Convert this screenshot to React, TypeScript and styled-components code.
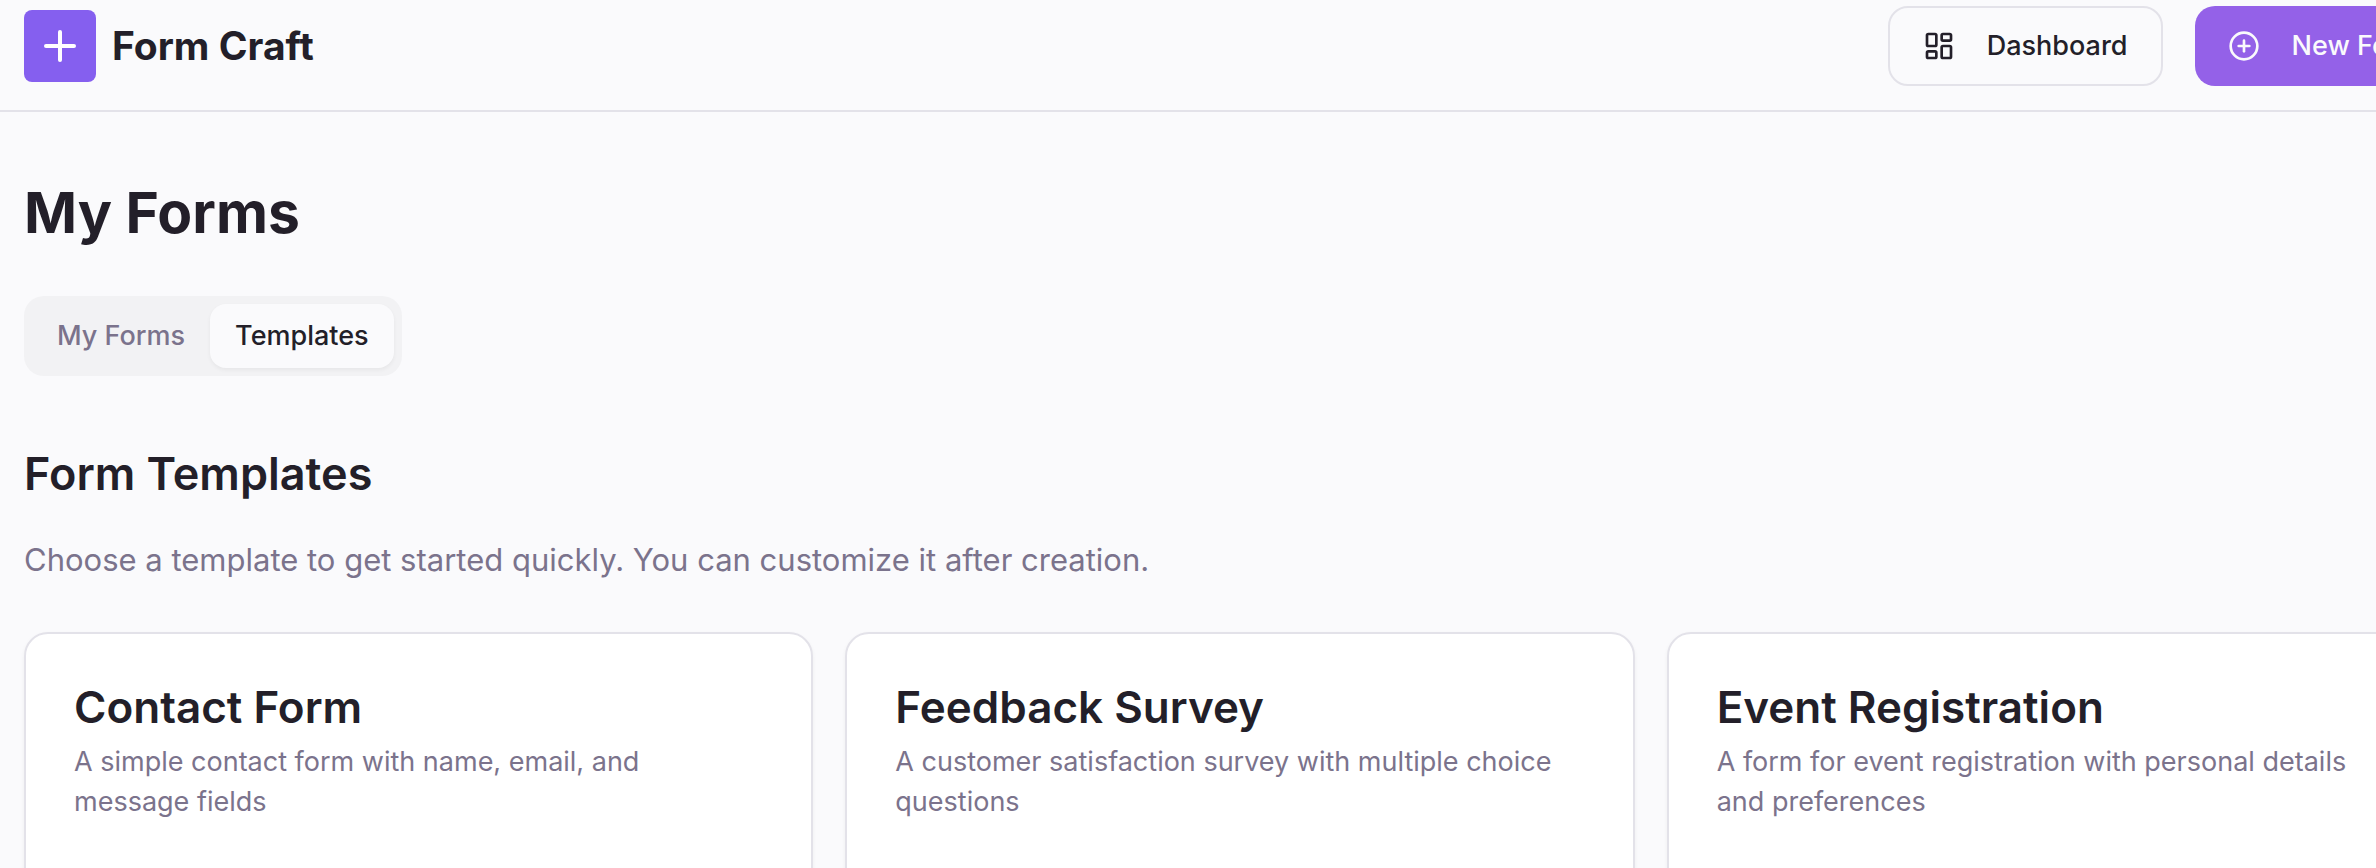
import React from "react";
import styled, { createGlobalStyle, css } from "styled-components";
import { CirclePlus, LayoutDashboard, Plus } from "lucide-react";

const color = {
  page: "#fafafc",
  card: "#ffffff",
  border: "#e3e2e9",
  text: "#231f29",
  muted: "#7b738c",
  track: "#f2f2f4",
  brand: "#855fef",
  primary: "#9461e8",
};

const GlobalStyle = createGlobalStyle`
  *, *::before, *::after { box-sizing: border-box; }
  body {
    margin: 0;
    overflow-x: hidden;
    background: ${color.page};
    color: ${color.text};
    font-family: Inter, "Liberation Sans", sans-serif;
    font-size: 27px;
    line-height: 40px;
  }
  h1, h2, h3, p { margin: 0; }
  button { font: inherit; cursor: pointer; }
`;

/* The workspace is a little wider than the window and runs off its right edge. */
const Workspace = styled.div`
  width: calc(100% + 104px);
  min-height: 100vh;
`;

const Header = styled.header`
  display: flex;
  align-items: center;
  justify-content: space-between;
  padding: 6px 24px 24px;
  border-bottom: 2px solid ${color.border};
`;

const Brand = styled.a`
  display: flex;
  align-items: center;
  gap: 16px;
  color: inherit;
  text-decoration: none;
  font-size: 39px;
  line-height: 56px;
  font-weight: 700;
`;

const BrandMark = styled.span`
  display: grid;
  place-items: center;
  width: 72px;
  height: 72px;
  border-radius: 8px;
  background: ${color.brand};
  color: #ffffff;
`;

const Actions = styled.nav`
  display: flex;
  gap: 32px;
`;

const ActionButton = styled.button<{ $variant: "outline" | "primary" }>`
  display: flex;
  align-items: center;
  gap: 32px;
  height: 80px;
  padding: 0 33px;
  border: 0;
  border-radius: 20px;
  font-weight: 500;
  white-space: nowrap;
  ${({ $variant }) =>
    $variant === "outline"
      ? css`
          border: 2px solid ${color.border};
          background: ${color.page};
          color: ${color.text};
        `
      : css`
          background: ${color.primary};
          color: ${color.page};
        `}
`;

const Main = styled.main`
  display: flex;
  flex-direction: column;
  align-items: flex-start;
  padding: 64px 24px;
`;

const PageTitle = styled.h1`
  font-size: 57px;
  line-height: 74px;
  font-weight: 700;
`;

const TabList = styled.div`
  display: flex;
  margin-top: 46px;
  padding: 8px;
  border-radius: 20px;
  background: ${color.track};
`;

const Tab = styled.button<{ $active?: boolean }>`
  height: 64px;
  padding: 0 25px;
  border: 0;
  border-radius: 16px;
  font-weight: 500;
  background: ${({ $active }) => ($active ? color.page : "transparent")};
  color: ${({ $active }) => ($active ? color.text : color.muted)};
  box-shadow: ${({ $active }) => ($active ? "0 2px 4px rgba(0, 0, 0, 0.05)" : "none")};
`;

const Panel = styled.section`
  width: 100%;
  margin-top: 64px;
`;

const SectionTitle = styled.h2`
  font-size: 45px;
  line-height: 68px;
  font-weight: 600;
`;

const Lead = styled.p`
  margin-top: 28px;
  font-size: 31px;
  line-height: 48px;
  color: ${color.muted};
`;

const CardGrid = styled.div`
  display: grid;
  grid-template-columns: repeat(3, minmax(0, 1fr));
  gap: 32px;
  margin-top: 48px;
`;

const Card = styled.article`
  display: flex;
  flex-direction: column;
  gap: 10px;
  min-height: 320px;
  padding: 48px;
  border: 2px solid ${color.border};
  border-radius: 24px;
  background: ${color.card};
  box-shadow: 0 2px 4px rgba(0, 0, 0, 0.05);
`;

const CardTitle = styled.h3`
  font-size: 44px;
  line-height: 50px;
  font-weight: 600;
`;

const CardText = styled.p`
  padding-right: 24px;
  color: ${color.muted};
`;

const templates = [
  {
    title: "Contact Form",
    text: "A simple contact form with name, email, and message fields",
  },
  {
    title: "Feedback Survey",
    text: "A customer satisfaction survey with multiple choice questions",
  },
  {
    title: "Event Registration",
    text: "A form for event registration with personal details and preferences",
  },
];

export default function App() {
  return (
    <>
      <GlobalStyle />
      <Workspace>
        <Header>
          <Brand href="#">
            <BrandMark>
              <Plus size={48} />
            </BrandMark>
            Form Craft
          </Brand>
          <Actions>
            <ActionButton type="button" $variant="outline">
              <LayoutDashboard size={32} />
              Dashboard
            </ActionButton>
            <ActionButton type="button" $variant="primary">
              <CirclePlus size={32} />
              New Form
            </ActionButton>
          </Actions>
        </Header>
        <Main>
          <PageTitle>My Forms</PageTitle>
          <TabList role="tablist">
            <Tab type="button" role="tab" aria-selected={false}>
              My Forms
            </Tab>
            <Tab type="button" role="tab" aria-selected $active>
              Templates
            </Tab>
          </TabList>
          <Panel role="tabpanel">
            <SectionTitle>Form Templates</SectionTitle>
            <Lead>
              Choose a template to get started quickly. You can customize it after creation.
            </Lead>
            <CardGrid>
              {templates.map((t) => (
                <Card key={t.title}>
                  <CardTitle>{t.title}</CardTitle>
                  <CardText>{t.text}</CardText>
                </Card>
              ))}
            </CardGrid>
          </Panel>
        </Main>
      </Workspace>
    </>
  );
}
